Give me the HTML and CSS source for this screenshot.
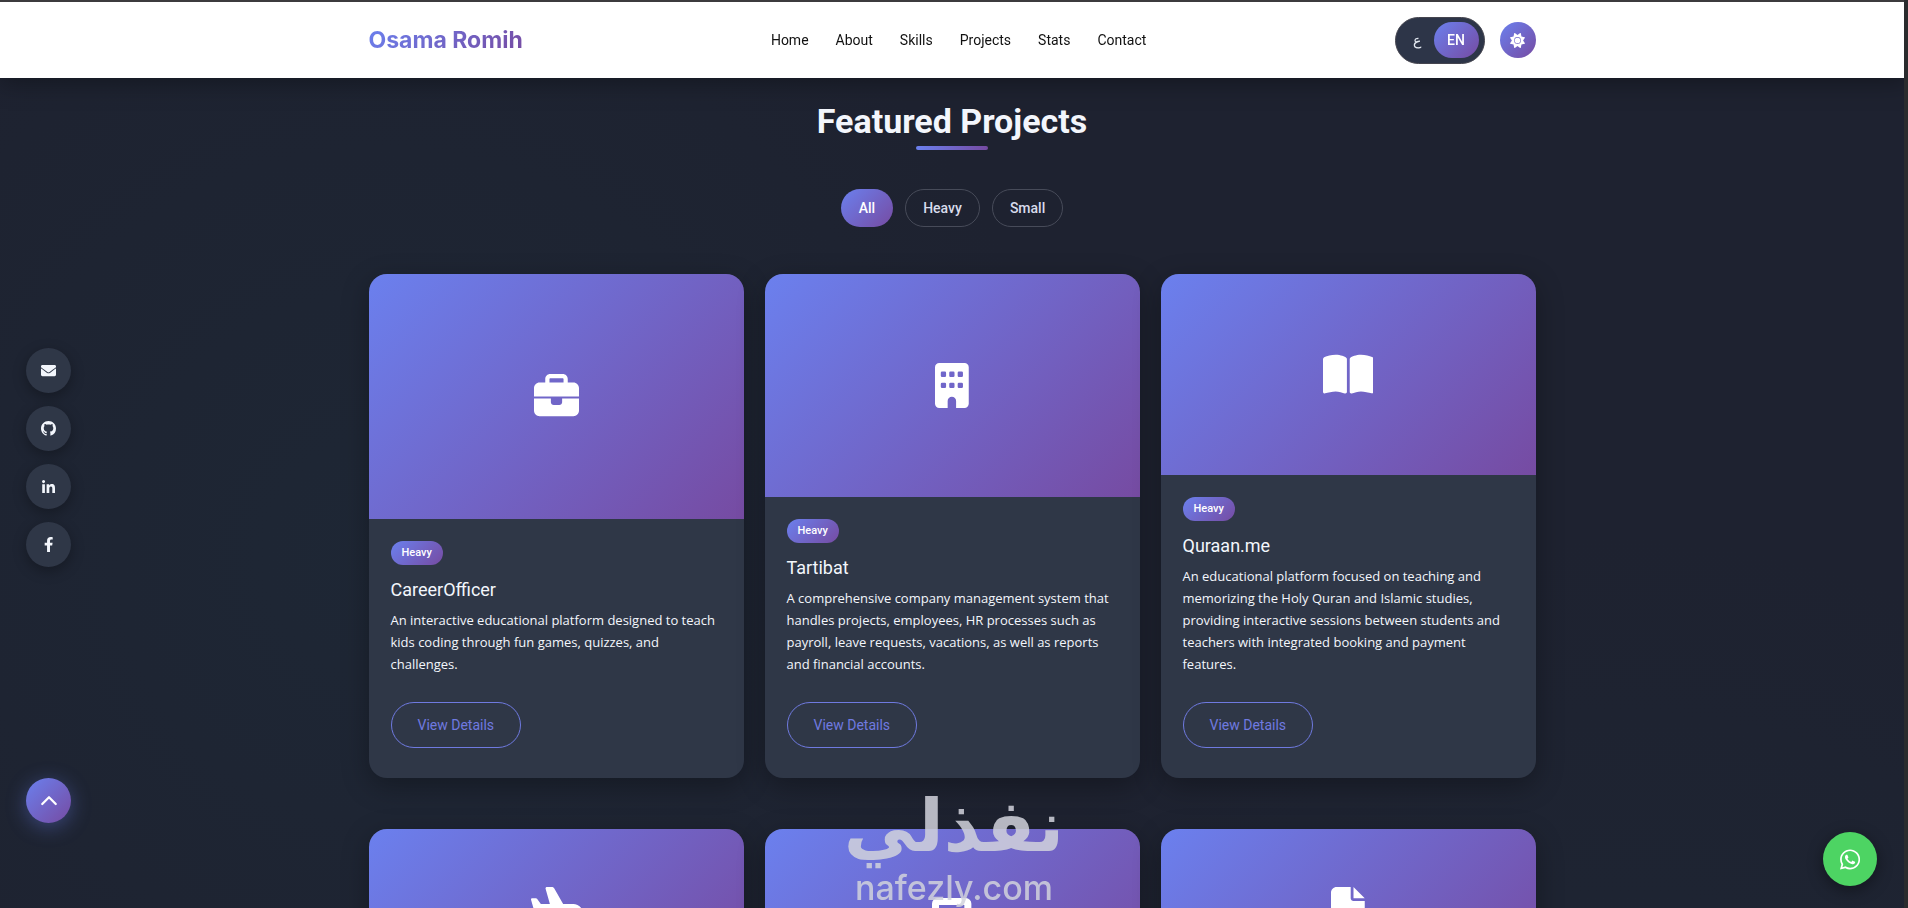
FILE: index.html
```
<!DOCTYPE html>
<html lang="en">
<head>
    <meta charset="UTF-8">
    <meta name="viewport" content="width=device-width, initial-scale=1.0">
    <title>Osama Romih</title>
    <link rel="stylesheet" href="styles.css">
</head>
<body>

    <!-- Header -->
    <header class="header">
        <div class="container header-inner">
            <a class="logo" href="#home">Osama Romih</a>
            <nav class="nav">
                <a href="#home">Home</a>
                <a href="#about">About</a>
                <a href="#skills">Skills</a>
                <a href="#projects">Projects</a>
                <a href="#stats">Stats</a>
                <a href="#contact">Contact</a>
            </nav>
            <div class="actions">
                <div class="lang-switch">
                    <button type="button" class="lang" lang="ar">ع</button>
                    <button type="button" class="lang active">EN</button>
                </div>
                <button type="button" class="theme-toggle" aria-label="Toggle theme">
                    <svg viewBox="0 0 512 512"><path fill-rule="evenodd" d="M361.5 1.2c5 2.1 8.6 6.6 9.6 11.9L391 121l107.9 19.8c5.3 1 9.8 4.6 11.9 9.6s1.5 10.7-1.6 15.2L446.9 256l62.3 90.3c3.1 4.5 3.7 10.2 1.6 15.2s-6.6 8.6-11.9 9.6L391 391 371.1 498.9c-1 5.3-4.6 9.8-9.6 11.9s-10.7 1.5-15.2-1.6L256 446.9l-90.3 62.3c-4.5 3.1-10.2 3.7-15.2 1.6s-8.6-6.6-9.6-11.9L121 391 13.1 371.1c-5.3-1-9.8-4.6-11.9-9.6s-1.5-10.7 1.6-15.2L65.1 256 2.8 165.7c-3.1-4.5-3.7-10.2-1.6-15.2s6.6-8.6 11.9-9.6L121 121 140.9 13.1c1-5.3 4.6-9.8 9.6-11.9s10.7-1.5 15.2 1.6L256 65.1 346.3 2.8c4.5-3.1 10.2-3.7 15.2-1.6zM160 256a96 96 0 1 1 192 0 96 96 0 1 1 -192 0zm212 0a116 116 0 1 0 -232 0 116 116 0 1 0 232 0z"/></svg>
                </button>
            </div>
        </div>
    </header>

    <!-- Projects -->
    <main class="container projects" id="projects">
        <h2 class="section-title">Featured Projects</h2>

        <div class="filters">
            <button type="button" class="filter active">All</button>
            <button type="button" class="filter">Heavy</button>
            <button type="button" class="filter">Small</button>
        </div>

        <div class="project-grid">
            <article class="card">
                <div class="card-media">
                    <svg viewBox="0 0 512 512"><path d="M184 48l144 0c4.400 0 8 3.600 8 8l0 40L176 96l0-40c0-4.400 3.600-8 8-8zm-56 8l0 40L64 96C28.700 96 0 124.700 0 160l0 96 192 0 128 0 192 0 0-96c0-35.300-28.700-64-64-64l-64 0 0-40c0-30.900-25.100-56-56-56L184 0c-30.900 0-56 25.100-56 56zM512 280l-192 0 0 40c0 17.700-14.300 32-32 32l-64 0c-17.700 0-32-14.300-32-32l0-40L0 280 0 416c0 35.300 28.700 64 64 64l384 0c35.300 0 64-28.700 64-64z"/></svg>
                </div>
                <div class="card-body">
                    <span class="badge">Heavy</span>
                    <h3>CareerOfficer</h3>
                    <p>An interactive educational platform designed to teach kids coding through fun games, quizzes, and challenges.</p>
                    <a class="btn-details" href="#careerofficer">View Details</a>
                </div>
            </article>

            <article class="card">
                <div class="card-media">
                    <svg viewBox="0 0 384 512"><path fill-rule="evenodd" d="M48 0h288a48 48 0 0 1 48 48v416a48 48 0 0 1-48 48h-96v-80a48 48 0 0 0-96 0v80H48a48 48 0 0 1-48-48V48A48 48 0 0 1 48 0zM80 98a14 14 0 0 0-14 14v32a14 14 0 0 0 14 14h32a14 14 0 0 0 14-14v-32a14 14 0 0 0-14-14zm96 0a14 14 0 0 0-14 14v32a14 14 0 0 0 14 14h32a14 14 0 0 0 14-14v-32a14 14 0 0 0-14-14zm96 0a14 14 0 0 0-14 14v32a14 14 0 0 0 14 14h32a14 14 0 0 0 14-14v-32a14 14 0 0 0-14-14zM80 224a14 14 0 0 0-14 14v32a14 14 0 0 0 14 14h32a14 14 0 0 0 14-14v-32a14 14 0 0 0-14-14zm96 0a14 14 0 0 0-14 14v32a14 14 0 0 0 14 14h32a14 14 0 0 0 14-14v-32a14 14 0 0 0-14-14zm96 0a14 14 0 0 0-14 14v32a14 14 0 0 0 14 14h32a14 14 0 0 0 14-14v-32a14 14 0 0 0-14-14z"/></svg>
                </div>
                <div class="card-body">
                    <span class="badge">Heavy</span>
                    <h3>Tartibat</h3>
                    <p>A comprehensive company management system that handles projects, employees, HR processes such as payroll, leave requests, vacations, as well as reports and financial accounts.</p>
                    <a class="btn-details" href="#tartibat">View Details</a>
                </div>
            </article>

            <article class="card">
                <div class="card-media">
                    <svg viewBox="0 0 576 512"><path d="M249.600 471.500c10.800 3.800 22.400-4.100 22.400-15.500V78.600c0-4.200-1.600-8.400-5-11C247.400 52 202.400 32 144 32C93.500 32 46.300 45.300 18.100 56.100C6.800 60.500 0 71.700 0 83.800V454.100c0 11.900 12.800 20.200 24.100 16.500C55.600 460.100 105.500 448 144 448c33.900 0 79 14 105.600 23.500zm76.800 0C353 462 398.100 448 432 448c38.500 0 88.400 12.100 119.900 22.600c11.300 3.800 24.100-4.600 24.100-16.500V83.800c0-12.100-6.800-23.300-18.100-27.600C529.700 45.300 482.500 32 432 32c-58.400 0-103.400 20-123 35.600c-3.300 2.600-5 6.800-5 11V456c0 11.400 11.700 19.300 22.400 15.500z"/></svg>
                </div>
                <div class="card-body">
                    <span class="badge">Heavy</span>
                    <h3>Quraan.me</h3>
                    <p>An educational platform focused on teaching and memorizing the Holy Quran and Islamic studies, providing interactive sessions between students and teachers with integrated booking and payment features.</p>
                    <a class="btn-details" href="#quraan">View Details</a>
                </div>
            </article>

            <article class="card">
                <div class="card-media short">
                    <svg viewBox="0 0 576 512"><path d="M482.300 192c34.200 0 93.700 29 93.700 64c0 36-59.500 64-93.700 64l-116.600 0L265.200 495.900c-5.700 10-16.300 16.100-27.800 16.100l-56.200 0c-10.600 0-18.300-10.200-15.400-20.400l49-171.600L112 320 68.800 377.600c-3 4-7.800 6.400-12.800 6.400l-42 0c-7.800 0-14-6.300-14-14c0-1.300 .2-2.600 .5-3.900L32 256 .5 145.900c-.4-1.300-.5-2.600-.5-3.900c0-7.800 6.300-14 14-14l42 0c5 0 9.800 2.400 12.800 6.400L112 192l102.900 0-49-171.600C162.900 10.200 170.600 0 181.200 0l56.200 0c11.500 0 22.100 6.200 27.800 16.100L365.700 192l116.600 0z"/></svg>
                </div>
            </article>

            <article class="card">
                <div class="card-media medium">
                    <svg viewBox="0 0 448 512"><path fill-rule="evenodd" d="M64 0h320a64 64 0 0 1 64 64v384a64 64 0 0 1-64 64H64a64 64 0 0 1-64-64V64A64 64 0 0 1 64 0zm16 80v272h288V80z"/></svg>
                </div>
            </article>

            <article class="card">
                <div class="card-media short">
                    <svg viewBox="0 0 384 512"><path d="M0 64C0 28.700 28.700 0 64 0L224 0l0 128c0 17.700 14.300 32 32 32l128 0 0 288c0 35.300-28.700 64-64 64L64 512c-35.300 0-64-28.700-64-64L0 64zm384 64l-128 0L256 0 384 128z"/></svg>
                </div>
            </article>
        </div>
    </main>

    <!-- Social links -->
    <div class="social">
        <a href="#email" aria-label="Email">
            <svg viewBox="0 0 512 512"><path d="M502.300 190.800c3.900-3.100 9.700-.2 9.700 4.700V400c0 26.500-21.500 48-48 48H48c-26.500 0-48-21.500-48-48V195.600c0-5 5.700-7.800 9.700-4.700 22.400 17.400 52.100 39.500 154.100 113.600 21.100 15.400 56.700 47.800 92.200 47.600 35.700.3 72-32.800 92.300-47.600 102-74.100 131.600-96.300 154-113.700zM256 320c23.200.4 56.600-29.200 73.400-41.400 132.700-96.300 142.800-104.700 173.400-128.700 5.800-4.500 9.200-11.500 9.200-18.900v-19c0-26.500-21.500-48-48-48H48c-26.500 0-48 21.500-48 48v19c0 7.400 3.400 14.300 9.200 18.900 30.600 23.900 40.700 32.400 173.400 128.700 16.800 12.200 50.200 41.800 73.400 41.400z"/></svg>
        </a>
        <a href="#github" aria-label="GitHub">
            <svg viewBox="0 0 16 16"><path d="M8 0C3.580 0 0 3.580 0 8c0 3.540 2.290 6.530 5.470 7.590.4.070.55-.17.55-.38 0-.19-.01-.82-.01-1.490-2.010.37-2.530-.49-2.690-.94-.09-.23-.48-.94-.82-1.130-.28-.15-.68-.52-.01-.53.63-.01 1.080.58 1.230.82.72 1.210 1.870.87 2.330.66.07-.52.28-.87.51-1.070-1.780-.2-3.640-.89-3.640-3.950 0-.87.31-1.590.82-2.150-.08-.2-.36-1.020.08-2.120 0 0 .67-.21 2.200.82.64-.18 1.320-.27 2-.27s1.360.09 2 .27c1.530-1.040 2.200-.82 2.200-.82.44 1.100.16 1.920.08 2.120.51.56.82 1.270.82 2.150 0 3.070-1.870 3.750-3.650 3.950.29.25.54.73.54 1.480 0 1.070-.01 1.930-.01 2.200 0 .21.15.46.55.38A8.010 8.010 0 0 0 16 8c0-4.420-3.580-8-8-8z"/></svg>
        </a>
        <a href="#linkedin" aria-label="LinkedIn">
            <svg class="small" viewBox="0 0 448 448"><path d="M100.280 448H7.400V148.900h92.880zM53.790 108.100C24.090 108.100 0 83.500 0 53.800a53.790 53.790 0 0 1 107.580 0c0 29.700-24.100 54.300-53.790 54.300zM447.900 448h-92.680V302.400c0-34.700-.7-79.200-48.290-79.200-48.290 0-55.690 37.700-55.690 76.700V448h-92.780V148.900h89.080v40.800h1.300c12.400-23.500 42.690-48.300 87.880-48.300 94 0 111.280 61.900 111.280 142.300V448z"/></svg>
        </a>
        <a href="#facebook" aria-label="Facebook">
            <svg viewBox="0 0 320 512"><path d="M279.140 288l14.220-92.660h-88.910v-60.130c0-25.350 12.420-50.060 52.240-50.060h40.420V6.260S260.430 0 225.360 0c-73.220 0-121.080 44.380-121.080 124.720v70.620H22.890V288h81.390v224h100.170V288z"/></svg>
        </a>
    </div>

    <button type="button" class="back-to-top" aria-label="Back to top">
        <svg viewBox="0 0 16 10"><path d="M2 8l6-6 6 6"/></svg>
    </button>

    <a class="whatsapp" href="#whatsapp" aria-label="WhatsApp">
        <svg viewBox="0 0 448 512"><path d="M380.900 97.100C339 55.100 283.200 32 223.900 32c-122.400 0-222 99.600-222 222 0 39.100 10.200 77.300 29.600 111L0 480l117.700-30.900c32.400 17.700 68.900 27 106.100 27h.1c122.300 0 224.100-99.600 224.100-222 0-59.300-25.200-115-67.100-157zm-157 341.600c-33.200 0-65.700-8.900-94-25.700l-6.700-4-69.800 18.300L72 359.200l-4.400-7c-18.500-29.400-28.200-63.300-28.200-98.200 0-101.700 82.800-184.500 184.600-184.500 49.300 0 95.600 19.200 130.400 54.100 34.800 34.900 56.200 81.200 56.100 130.500 0 101.800-84.900 184.600-186.600 184.600zm101.200-138.200c-5.500-2.800-32.800-16.200-37.900-18-5.100-1.900-8.800-2.800-12.500 2.800-3.700 5.600-14.300 18-17.600 21.800-3.200 3.700-6.500 4.200-12 1.400-32.600-16.300-54-29.100-75.500-66-5.700-9.800 5.700-9.100 16.300-30.300 1.800-3.700.9-6.900-.5-9.700-1.400-2.800-12.500-30.100-17.100-41.200-4.500-10.800-9.100-9.300-12.500-9.500-3.200-.2-6.900-.2-10.600-.2-3.700 0-9.700 1.400-14.800 6.900-5.100 5.600-19.400 19-19.400 46.300 0 27.300 19.900 53.700 22.600 57.400 2.800 3.700 39.100 59.700 94.800 83.800 35.200 15.200 49 16.500 66.600 13.900 10.700-1.600 32.800-13.400 37.400-26.400 4.600-13 4.600-24.100 3.200-26.400-1.300-2.500-5-3.900-10.500-6.600z"/></svg>
    </a>

    <!-- Watermark -->
    <div class="watermark">
        <span class="watermark-ar" lang="ar" dir="rtl">نفذلي</span>
        <span class="watermark-en">nafezly.com</span>
    </div>

    <div class="edge"></div>

</body>
</html>
```

FILE: styles.css
```
:root {
    --gradient: linear-gradient(135deg, #6b80ee 0%, #764ba2 100%);
    --bg: #1e2230;
    --card: #2f3747;
    --text: #f3f6fc;
}
* {
    box-sizing: border-box;
}
body {
    margin: 0;
    padding-right: 4px;
    font-family: Roboto, "Noto Sans", sans-serif;
    color: var(--text);
    background-color: var(--bg);
    background-image: radial-gradient(circle at 20% 40%, rgba(30, 42, 56, 0.6), transparent 40%),
        radial-gradient(circle at 85% 90%, rgba(30, 42, 56, 0.5), transparent 35%);
}
a {
    text-decoration: none;
}
button {
    font-family: inherit;
    padding: 0;
    border: none;
    cursor: pointer;
}
svg {
    display: block;
    fill: currentColor;
}
.container {
    max-width: 1167px;
    margin: 0 auto;
}

/* header */
.header {
    position: fixed;
    top: 0;
    left: 0;
    right: 0;
    z-index: 10;
    height: 78px;
    padding-right: 4px;
    border-top: 2px solid #3c3b3d;
    background-color: #fff;
    box-shadow: 0 4px 24px rgba(0, 0, 0, 0.35);
}
.header-inner {
    display: flex;
    align-items: center;
    justify-content: space-between;
    height: 100%;
}
.logo {
    font-family: Inter, sans-serif;
    font-size: 23px;
    font-weight: 700;
    color: transparent;
    background-image: var(--gradient);
    background-clip: text;
}
.nav {
    display: flex;
    gap: 27px;
}
.nav a {
    font-size: 14px;
    color: #111;
}
.actions {
    display: flex;
    align-items: center;
    gap: 15px;
}
.lang-switch {
    display: flex;
    align-items: center;
    height: 47px;
    padding: 0 5px;
    border: 1px solid #45454f;
    border-radius: 24px;
    background-color: #2d3548;
}
.lang {
    width: 33px;
    height: 36px;
    border-radius: 18px;
    font-size: 14px;
    color: #e2e8f0;
    background: none;
}
.lang.active {
    width: 45px;
    font-weight: 500;
    color: #fff;
    background-image: var(--gradient);
}
.theme-toggle {
    display: grid;
    place-items: center;
    width: 36px;
    height: 36px;
    border-radius: 50%;
    color: #fff;
    background-image: var(--gradient);
}
.theme-toggle svg {
    width: 15px;
}

/* projects */
.projects {
    padding: 96px 0 60px;
}
.section-title {
    margin: 0;
    font-size: 34px;
    line-height: 50px;
    font-weight: 700;
    text-align: center;
}
.section-title::after {
    content: "";
    display: block;
    width: 72px;
    height: 4px;
    margin: 0 auto;
    border-radius: 2px;
    background-image: linear-gradient(90deg, #6b80ee, #764ba2);
}
.filters {
    display: flex;
    justify-content: center;
    gap: 12px;
    margin: 39px 0 47px;
}
.filter {
    height: 38px;
    padding: 0 17px;
    border: 1px solid #474b59;
    border-radius: 19px;
    font-size: 14px;
    font-weight: 500;
    color: #d8dcec;
    background: none;
}
.filter.active {
    border: none;
    padding: 0 18px;
    color: #fff;
    background-image: var(--gradient);
}
.project-grid {
    display: grid;
    grid-template-columns: repeat(3, 1fr);
    gap: 51px 21px;
}
.card {
    display: flex;
    flex-direction: column;
    min-height: 504px;
    border-radius: 18px;
    overflow: hidden;
    background-color: var(--card);
    box-shadow: 0 8px 28px rgba(0, 0, 0, 0.3);
}
.card-media {
    display: flex;
    align-items: center;
    justify-content: center;
    flex: 1 0 auto;
    color: #fff;
    background-image: var(--gradient);
}
.card-media.short {
    flex: 0 0 160px;
}
.card-media.medium {
    flex: 0 0 182px;
}
.card-media svg {
    height: 45px;
}
.card-body {
    padding: 22px 22px 30px;
}
.badge {
    display: block;
    width: fit-content;
    padding: 0 11px;
    border-radius: 12px;
    font-size: 11px;
    line-height: 24px;
    font-weight: 500;
    color: #fff;
    background-image: var(--gradient);
}
.card-body h3 {
    margin: 12px 0 6px;
    font-size: 18px;
    line-height: 26px;
    font-weight: 400;
}
.card-body p {
    margin: 0 0 27px;
    font-family: "Open Sans", "Noto Sans", sans-serif;
    font-size: 13px;
    line-height: 22px;
    font-weight: 500;
}
.btn-details {
    display: block;
    width: fit-content;
    padding: 0 26px;
    border: 1px solid #6f7ae0;
    border-radius: 23px;
    font-size: 14px;
    line-height: 44px;
    color: #6f7ae0;
}

/* floating buttons */
.social {
    position: fixed;
    left: 26px;
    top: 348px;
    display: flex;
    flex-direction: column;
    gap: 13px;
}
.social a {
    display: grid;
    place-items: center;
    width: 45px;
    height: 45px;
    border-radius: 50%;
    color: var(--text);
    background-color: var(--card);
    box-shadow: 0 4px 14px rgba(0, 0, 0, 0.3);
}
.social svg {
    height: 15px;
}
.social svg.small {
    height: 13px;
}
.back-to-top {
    position: fixed;
    left: 26px;
    bottom: 85px;
    display: grid;
    place-items: center;
    width: 45px;
    height: 45px;
    border-radius: 50%;
    background-image: var(--gradient);
    box-shadow: 0 4px 20px rgba(102, 126, 234, 0.4);
}
.back-to-top svg {
    width: 18px;
    fill: none;
    stroke: #fff;
    stroke-width: 2;
    stroke-linecap: round;
    stroke-linejoin: round;
}
.whatsapp {
    position: fixed;
    right: 31px;
    bottom: 22px;
    display: grid;
    place-items: center;
    width: 54px;
    height: 54px;
    border-radius: 50%;
    color: #fff;
    background-color: #4dd463;
    box-shadow: 0 4px 16px rgba(0, 0, 0, 0.4);
}
.whatsapp svg {
    height: 23px;
}

/* watermark */
.watermark {
    position: fixed;
    left: 0;
    right: 0;
    bottom: 0;
    display: flex;
    flex-direction: column;
    align-items: center;
    color: #d2d3dc;
    opacity: 0.85;
    pointer-events: none;
}
.watermark-ar {
    font-family: "DejaVu Sans", sans-serif;
    font-size: 72px;
    line-height: 84px;
    font-weight: 700;
}
.watermark-en {
    font-family: Inter, sans-serif;
    font-size: 34px;
    line-height: 40px;
    font-weight: 500;
}

/* right window edge */
.edge {
    position: fixed;
    top: 0;
    right: 0;
    bottom: 0;
    z-index: 20;
    width: 4px;
    background-color: #2a2c2e;
}
```
